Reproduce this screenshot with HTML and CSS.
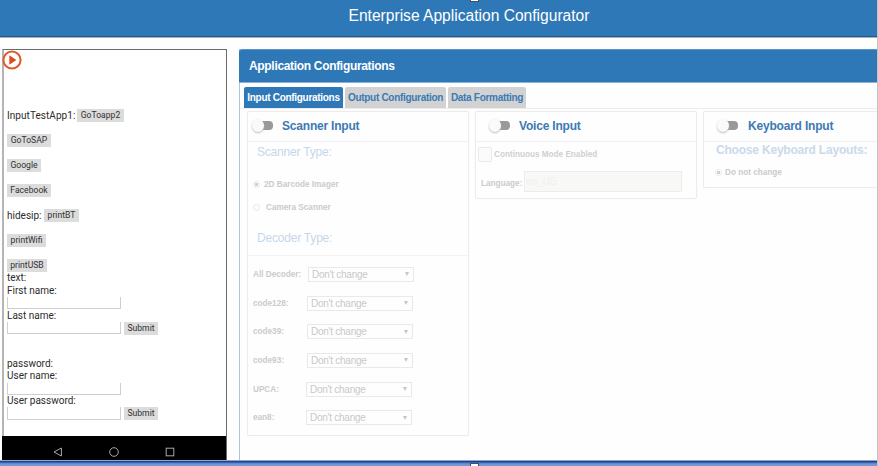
FILE: index.html
```html
<!DOCTYPE html>
<html lang="en">
<head>
<meta charset="utf-8">
<title>Enterprise Application Configurator</title>
<link rel="stylesheet" href="styles.css">
</head>
<body>
<div class="page">
  <header class="topbar"><h1>Enterprise Application Configurator</h1></header>
  <main class="main">
    <section class="phone">
      <svg class="play" viewBox="0 0 20 20"><circle cx="10" cy="10" r="8.6" fill="#fff" stroke="#e2592c" stroke-width="2"/><path d="M7.3 5.2 14.4 10 7.3 14.8Z" fill="#e2481c"/></svg>
      <div class="screen">
        <div class="row"><span class="w-app">InputTestApp1:</span><button class="b-app">GoToapp2</button></div>
        <div class="row"><button class="b-sap">GoToSAP</button></div>
        <div class="row"><button class="b-goo">Google</button></div>
        <div class="row"><button class="b-fb">Facebook</button></div>
        <div class="row"><span class="w-sip">hidesip:</span><button class="b-bt">printBT</button></div>
        <div class="row"><button class="b-wifi">printWifi</button></div>
        <div class="row"><button class="b-usb">printUSB</button></div>
        <div class="line">text:</div>
        <div class="line">First name:</div>
        <div class="field"><i class="input"></i></div>
        <div class="line">Last name:</div>
        <div class="field"><i class="input"></i><button class="b-sub">Submit</button></div>
        <div class="line second">password:</div>
        <div class="line">User name:</div>
        <div class="field"><i class="input"></i></div>
        <div class="line">User password:</div>
        <div class="field"><i class="input"></i><button class="b-sub">Submit</button></div>
      </div>
      <nav class="keys">
        <svg viewBox="0 0 10 10"><path d="M8.4 1V9L1 5Z"/></svg>
        <svg viewBox="0 0 10 10"><circle cx="5" cy="5" r="4.3"/></svg>
        <svg viewBox="0 0 10 10"><rect x="1.2" y="1.2" width="7.6" height="7.6"/></svg>
      </nav>
    </section>
    <section class="panel">
      <h2 class="panel-title"><span>Application Configurations</span></h2>
      <div class="tabs">
        <span class="tab active t1">Input Configurations</span>
        <span class="tab t2">Output Configuration</span>
        <span class="tab t3">Data Formatting</span>
      </div>
      <div class="cards">
        <article class="card scanner">
          <h3><i class="toggle"></i><span class="h-scan">Scanner Input</span></h3>
          <h4 class="type">Scanner Type:</h4>
          <div class="radio r1"><i class="dot on"></i><span>2D Barcode Imager</span></div>
          <div class="radio r2"><i class="dot"></i><span>Camera Scanner</span></div>
          <h4 class="type decoder">Decoder Type:</h4>
          <div class="decoders">
            <div class="dec"><label>All Decoder:</label><div class="select s1">Don't change<b></b></div></div>
            <div class="dec"><label>code128:</label><div class="select">Don't change<b></b></div></div>
            <div class="dec"><label>code39:</label><div class="select">Don't change<b></b></div></div>
            <div class="dec"><label>code93:</label><div class="select">Don't change<b></b></div></div>
            <div class="dec"><label>UPCA:</label><div class="select s5">Don't change<b></b></div></div>
            <div class="dec"><label>ean8:</label><div class="select s5">Don't change<b></b></div></div>
          </div>
        </article>
        <article class="card voice">
          <h3><i class="toggle"></i><span class="h-voice">Voice Input</span></h3>
          <div class="check"><i class="box"></i><span>Continuous Mode Enabled</span></div>
          <div class="lang"><label>Language:</label><div class="langbox">en_US</div></div>
        </article>
        <article class="card keyboard">
          <h3><i class="toggle"></i><span class="h-key">Keyboard Input</span></h3>
          <h4 class="layouts">Choose Keyboard Layouts:</h4>
          <div class="radio r3"><i class="dot on"></i><span>Do not change</span></div>
        </article>
      </div>
    </section>
  </main>
  <footer class="bottom"></footer>
  <i class="handle top"></i><i class="handle low"></i>
</div>
</body>
</html>
```
FILE: styles.css
```css
* { box-sizing: border-box; }
body { margin: 0; background: #fff; font-family: "Liberation Sans", Arial, sans-serif; }
h1, h2, h3, h4 { margin: 0; font-weight: normal; }
i { font-style: normal; display: block; flex: none; }
.page { position: relative; width: 878px; height: 466px; overflow: hidden; display: flex; flex-direction: column; border-right: 1px solid #c4c4c4; background: #fefefe; }
.topbar { height: 38px; flex: none; background: #2e78b7; border-bottom: 1px solid #a9b0b6; box-shadow: inset 0 -1px #205b91; text-align: center; }
.topbar h1 { font-size: 15.6px; line-height: 32px; color: #fff; padding-left: 61px; white-space: nowrap; }
.main { height: 422px; flex: none; display: flex; padding: 11px 0 0 2px; gap: 12px; }

.phone { width: 225px; flex: none; height: 411px; border: 1px solid #6b6b6b; border-left: 2px solid #b5b5b5; border-bottom: 0; display: flex; flex-direction: column; font-family: Roboto, sans-serif; font-size: 10px; color: #2b2b2b; background: #fff; }
.play { width: 20px; height: 20px; margin-left: -2.5px; flex: none; display: block; }
.screen { height: 366px; flex: none; padding: 33.5px 0 0 3px; }
.row { height: 24.9px; display: flex; align-items: center; white-space: nowrap; }
.phone button { height: 13px; padding: 0; border: 0; background: #dcdcdc; color: #303030; font: 8.6px/13px Roboto, sans-serif; text-align: center; white-space: nowrap; flex: none; }
.w-app { width: 70px; letter-spacing: .05px; }
.w-sip { width: 37px; }
.phone .b-app { width: 47px; }
.phone .b-sap { width: 44px; }
.phone .b-goo { width: 34px; }
.phone .b-fb { width: 44px; }
.phone .b-bt { width: 35px; }
.phone .b-wifi { width: 39px; }
.phone .b-usb { width: 40px; }
.phone .b-sub { width: 34px; }
.row:nth-child(7) { height: 19.5px; padding-top: 6px; }
.line { height: 12.3px; line-height: 12.3px; white-space: nowrap; }
.field { height: 12.6px; display: flex; gap: 3px; }
.input { width: 114px; height: 12.3px; border: 1px solid #cfcfcf; border-top: 0; }
.second { margin-top: 23.5px; }
.keys { height: 24px; margin-left: -2px; background: #000; display: flex; justify-content: center; gap: 46px; align-items: center; padding-top: 7px; }
.keys svg { width: 10px; height: 10px; fill: none; stroke: #a8a8a8; stroke-width: 1; }

.panel { flex: 1; min-width: 0; border-left: 1px solid #a9c5df; }
.panel-title { height: 34px; margin-left: -1px; background: #2e78b7; border-top: 1px solid #5b93c5; border-bottom: 1px solid #8ab2d7; border-radius: 3px 0 0 0; color: #fff; font-size: 12px; letter-spacing: -.32px; font-weight: bold; line-height: 33px; padding-left: 10px; }
.tabs { height: 26px; display: flex; gap: 2px; padding: 4px 0 0 4px; border-bottom: 1px solid #ededed; }
.tab { height: 21px; border-radius: 2px 2px 0 0; background: #d2d2d2; color: #3a7ab5; font-size: 10px; letter-spacing: -.3px; font-weight: bold; line-height: 21px; text-align: center; white-space: nowrap; }
.tab.active { background: #2e78b7; color: #fff; }
.t1 { width: 99px; }
.t2 { width: 101px; }
.t3 { width: 78px; }
.cards { display: flex; align-items: flex-start; gap: 6px; padding: 2px 0 0 7px; }
.card { flex: none; border: 1px solid #ececec; border-radius: 2px; box-shadow: 0 0 1px #e5e5e5; }
.scanner { width: 222px; height: 325px; }
.voice { width: 222px; height: 88px; }
.keyboard { width: 180px; height: 77px; }
.card h3 { height: 30px; border-bottom: 1px solid #f1f1f1; display: flex; align-items: center; color: #3d79b5; font-size: 12px; font-weight: bold; padding: 0 0 2px 4px; white-space: nowrap; }
.voice h3, .keyboard h3 { padding-left: 13px; }
.toggle { position: relative; width: 21px; height: 9px; background: linear-gradient(90deg, transparent 8px, #999 8px); border-radius: 4px; }
.toggle::before { content: ""; position: absolute; left: 0; top: -2px; width: 12px; height: 13px; border-radius: 50%; background: #fafafa; box-shadow: 0 1px 2px #bbb; }
.h-scan, .h-voice, .h-key { padding-left: 9px; letter-spacing: -.2px; }
.h-key { padding-left: 10px; }
h4.type { height: 22px; line-height: 21px; padding-left: 9px; font-size: 12px; letter-spacing: -.2px; color: #c5d8ea; }
.radio { display: flex; align-items: center; height: 14px; font-size: 8.2px; font-weight: bold; color: #cbcbcb; }
.dot { width: 7px; height: 7px; border: 1px solid #e8e8e8; border-radius: 50%; }
.dot.on { background: radial-gradient(circle, #cfcfcf 1.5px, #fff 2px); }
.r1 { margin: 13px 0 0 5px; gap: 4px; }
.r2 { margin: 9px 0 0 5px; gap: 6px; }
h4.decoder { height: 36px; margin-top: 6px; line-height: 36px; border-bottom: 1px solid #f3f3f3; }
.decoders { padding: 4px 0 0 5px; }
.dec { height: 28.7px; display: flex; align-items: center; font-size: 8.2px; font-weight: bold; color: #cbcbcb; }
.dec label { width: 54px; white-space: nowrap; }
.select { width: 106px; height: 15px; border: 1px solid #e9e9e9; padding-left: 3px; line-height: 13px; font-size: 10px; letter-spacing: -.25px; font-weight: normal; color: #c8c8c8; display: flex; justify-content: space-between; align-items: center; padding-right: 4px; }
.select b { border: 2px solid transparent; border-top: 4px solid #c5c5c5; border-bottom: 0; }
.s1 { margin-left: 1px; }
.s5 { margin-left: -1px; }
.check { display: flex; align-items: center; gap: 2px; padding: 5px 0 0 2px; font-size: 8.2px; font-weight: bold; color: #d0d0d0; }
.box { width: 14px; height: 15px; border: 1px solid #e9e9e9; border-radius: 2px; background: #fbfbfb; }
.lang { display: flex; align-items: center; padding: 9px 0 0 5px; font-size: 8.2px; font-weight: bold; color: #cbcbcb; }
.lang label { width: 43px; padding-top: 3px; }
.langbox { width: 158px; height: 21px; border: 1px solid #ececea; background: #f8f8f6; color: #f1f1ef; line-height: 19px; padding-left: 1px; font-size: 10px; font-weight: normal; }
.layouts { height: 18px; padding-left: 12px; line-height: 17px; font-size: 12px; letter-spacing: -.2px; font-weight: bold; color: #c9daeb; white-space: nowrap; }
.r3 { margin: 5px 0 0 11px; gap: 3px; }
.bottom { height: 6px; flex: none; background: linear-gradient(#9ba5bd 0 1px, #1741a0 1px 2px, #3565b0 2px 3px, #6287cd 3px 4px, #7396d4 4px); }
.handle { position: absolute; left: 470px; width: 9px; background: #fff; border: 1px solid #44536b; }
.handle.top { top: -1px; height: 3px; border-top: 0; }
.handle.low { top: 463px; height: 6px; }
```
